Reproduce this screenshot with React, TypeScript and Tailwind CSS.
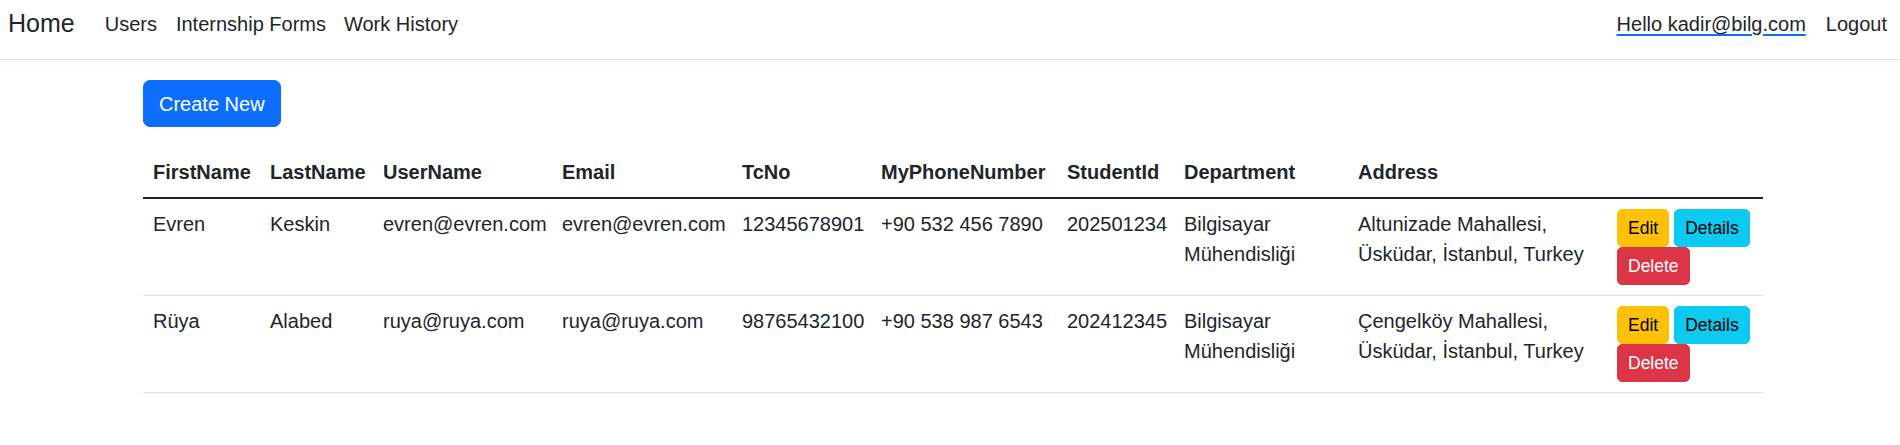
import React from 'react';

interface User {
  firstName: string;
  lastName: string;
  userName: string;
  email: string;
  tcNo: string;
  phone: string;
  studentId: string;
  department: string;
  address: string;
}

const users: User[] = [
  {
    firstName: 'Evren',
    lastName: 'Keskin',
    userName: 'evren@evren.com',
    email: 'evren@evren.com',
    tcNo: '12345678901',
    phone: '+90 532 456 7890',
    studentId: '202501234',
    department: 'Bilgisayar Mühendisliği',
    address: 'Altunizade Mahallesi, Üsküdar, İstanbul, Turkey',
  },
  {
    firstName: 'Rüya',
    lastName: 'Alabed',
    userName: 'ruya@ruya.com',
    email: 'ruya@ruya.com',
    tcNo: '98765432100',
    phone: '+90 538 987 6543',
    studentId: '202412345',
    department: 'Bilgisayar Mühendisliği',
    address: 'Çengelköy Mahallesi, Üsküdar, İstanbul, Turkey',
  },
];

const headers = ['FirstName', 'LastName', 'UserName', 'Email', 'TcNo', 'MyPhoneNumber', 'StudentId', 'Department', 'Address', ''];

const App: React.FC = () => {
  return (
    <div className="min-h-screen bg-white text-[#212529] text-[20px] font-['Liberation_Sans',Arial,sans-serif]">
      {/* navbar */}
      <nav className="h-[60px] pb-[12px] border-b border-[#dee2e6] shadow-[0_2px_6px_rgba(0,0,0,0.03)] pl-2 pr-[3px]">
        <div className="flex items-center h-[48px]">
          <a className="text-[25px] mr-5 text-[#212529] cursor-pointer">Home</a>
          <ul className="flex items-center">
            <li><a className="px-[10px] cursor-pointer">Users</a></li>
            <li><a className="px-[9px] cursor-pointer">Internship Forms</a></li>
            <li><a className="px-[9px] cursor-pointer">Work History</a></li>
          </ul>
          <ul className="flex items-center ml-auto">
            <li>
              <a className="px-[10px] underline decoration-[#0d6efd] underline-offset-[3px] cursor-pointer">Hello kadir@bilg.com</a>
            </li>
            <li><a className="px-[10px] cursor-pointer">Logout</a></li>
          </ul>
        </div>
      </nav>

      <main className="w-[1620px] ml-[143px] pt-5">
        <p className="mb-5">
          <button className="h-[47px] px-[15px] bg-[#0d6efd] text-white rounded-[7px] leading-[30px] border border-[#0d6efd]">
            Create New
          </button>
        </p>

        <table className="w-full table-fixed border-collapse mb-5 align-top">
          <colgroup>
            <col className="w-[117px]" />
            <col className="w-[113px]" />
            <col className="w-[179px]" />
            <col className="w-[180px]" />
            <col className="w-[139px]" />
            <col className="w-[186px]" />
            <col className="w-[117px]" />
            <col className="w-[174px]" />
            <col className="w-[259px]" />
            <col className="w-[156px]" />
          </colgroup>
          <thead>
            <tr className="border-b-2 border-[#212529]">
              {headers.map((h, i) => (
                <th key={i} className="text-left font-bold p-[10px] leading-[30px] whitespace-nowrap">
                  {h}
                </th>
              ))}
            </tr>
          </thead>
          <tbody>
            {users.map((u) => (
              <tr key={u.userName} className="border-b border-[#dee2e6] align-top">
                <td className="p-[10px] leading-[30px]">{u.firstName}</td>
                <td className="p-[10px] leading-[30px]">{u.lastName}</td>
                <td className="p-[10px] leading-[30px]">{u.userName}</td>
                <td className="p-[10px] leading-[30px]">{u.email}</td>
                <td className="p-[10px] leading-[30px]">{u.tcNo}</td>
                <td className="p-[10px] leading-[30px]">{u.phone}</td>
                <td className="p-[10px] leading-[30px]">{u.studentId}</td>
                <td className="p-[10px] leading-[30px]">{u.department}</td>
                <td className="p-[10px] leading-[30px]">{u.address}</td>
                <td className="p-[10px] leading-[30px]">
                  <div className="flex flex-wrap gap-x-[5px] w-[140px]">
                    <button className="h-[38px] px-[10px] text-[17.5px] bg-[#ffc107] border border-[#ffc107] text-black rounded-[5px]">Edit</button>
                    <button className="h-[38px] px-[10px] text-[17.5px] bg-[#0dcaf0] border border-[#0dcaf0] text-black rounded-[5px]">Details</button>
                    <button className="h-[38px] px-[10px] text-[17.5px] bg-[#dc3545] border border-[#dc3545] text-white rounded-[5px]">Delete</button>
                  </div>
                </td>
              </tr>
            ))}
          </tbody>
        </table>
      </main>
    </div>
  );
};

export default App;
